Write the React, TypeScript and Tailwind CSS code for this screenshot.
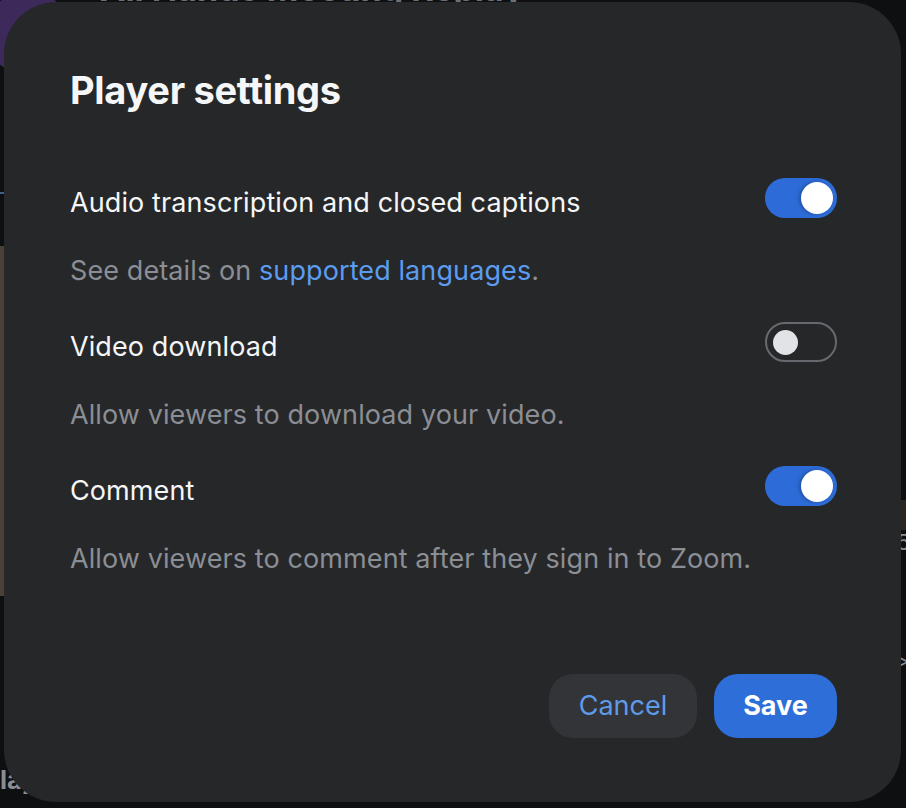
import { useState } from "react";

type Setting = {
  id: string;
  title: string;
  on: boolean;
};

const settings: Setting[] = [
  { id: "captions", title: "Audio transcription and closed captions", on: true },
  { id: "download", title: "Video download", on: false },
  { id: "comment", title: "Comment", on: true },
];

function Toggle(props: { on: boolean; onChange: () => void }) {
  const { on, onChange } = props;
  return (
    <button
      type="button"
      onClick={onChange}
      className={
        on
          ? "flex h-[40px] w-[72px] shrink-0 -translate-y-[5px] items-center justify-end rounded-full bg-[#2d6cd8] px-[4px]"
          : "flex h-[40px] w-[72px] shrink-0 -translate-y-[5px] items-center justify-start rounded-full border-2 border-[#66696e] px-[6px]"
      }
    >
      {on ? (
        <span className="block h-[32px] w-[32px] rounded-full bg-white shadow-[-2px_0_4px_rgba(0,0,0,0.25)]" />
      ) : (
        <span className="block h-[25px] w-[25px] rounded-full bg-[#e1e3e7]" />
      )}
    </button>
  );
}

function Description(props: { id: string }) {
  if (props.id === "captions") {
    return (
      <p>
        See details on{" "}
        <a href="#" className="text-[#5b9cf0]">
          supported languages
        </a>
        .
      </p>
    );
  }
  if (props.id === "download") {
    return <p>Allow viewers to download your video.</p>;
  }
  return <p>Allow viewers to comment after they sign in to Zoom.</p>;
}

export default function App() {
  const [values, setValues] = useState<Record<string, boolean>>(
    Object.fromEntries(settings.map((s) => [s.id, s.on])),
  );

  return (
    <div
      className="relative h-[808px] w-[906px] overflow-hidden bg-[#0e0f11]"
      style={{ fontFamily: "Inter, 'Noto Sans', sans-serif" }}
    >
      {/* page behind the dialog, mostly hidden */}
      <div className="absolute -left-[12px] -top-[10px] h-[86px] w-[80px] rounded-full bg-[#3d2a5b]" />
      <div className="absolute left-[100px] top-[-31px] text-[34px] font-bold leading-[40px] text-[#6e7075]">
        All Hands Meeting Replay
      </div>
      <div className="absolute left-0 top-[192px] h-[2px] w-[6px] bg-[#3f5f93]" />
      <div className="absolute left-0 top-[246px] h-[350px] w-[6px] bg-[#4a4138]" />
      <div className="absolute left-0 top-[760px] text-[26px] font-bold text-[#8a8c90]">
        lay
      </div>
      <div className="absolute right-0 top-[500px] h-[30px] w-[6px] bg-[#2a2622]" />
      <div className="absolute right-[-4px] top-[526px] text-[22px] text-[#8a8c90]">5</div>
      <div className="absolute right-[-4px] top-[644px] text-[22px] text-[#8a8c90]">&gt;</div>

      <div className="relative ml-[4px] mt-[2px] flex h-[800px] w-[897px] flex-col rounded-[52px] bg-[#262729] pb-[64px] pl-[66px] pr-[64px] pt-[68px]">
        <h1 className="text-[38px] font-bold leading-[40px] tracking-[-0.3px] text-[#f5f6f7]">
          Player settings
        </h1>

        <div className="mt-[73px] flex flex-col gap-[40px]">
          {settings.map((s) => (
            <div key={s.id} className="flex flex-col gap-[32px]">
              <div className="flex items-center justify-between">
                <span className="text-[27px] leading-[32px] tracking-[0.1px] text-[#f5f6f7]">
                  {s.title}
                </span>
                <Toggle
                  on={values[s.id]}
                  onChange={() => setValues({ ...values, [s.id]: !values[s.id] })}
                />
              </div>
              <div className="text-[27px] leading-[32px] tracking-[0.1px] text-[#8b8e94]">
                <Description id={s.id} />
              </div>
            </div>
          ))}
        </div>

        <div className="mt-auto flex justify-end gap-[17px]">
          <button
            type="button"
            className="h-[64px] w-[148px] rounded-[24px] bg-[#333438] text-[27px] text-[#5e9be8]"
          >
            Cancel
          </button>
          <button
            type="button"
            className="h-[64px] w-[123px] rounded-[24px] bg-[#2e6ed8] text-[27px] font-bold text-white"
          >
            Save
          </button>
        </div>
      </div>
    </div>
  );
}
